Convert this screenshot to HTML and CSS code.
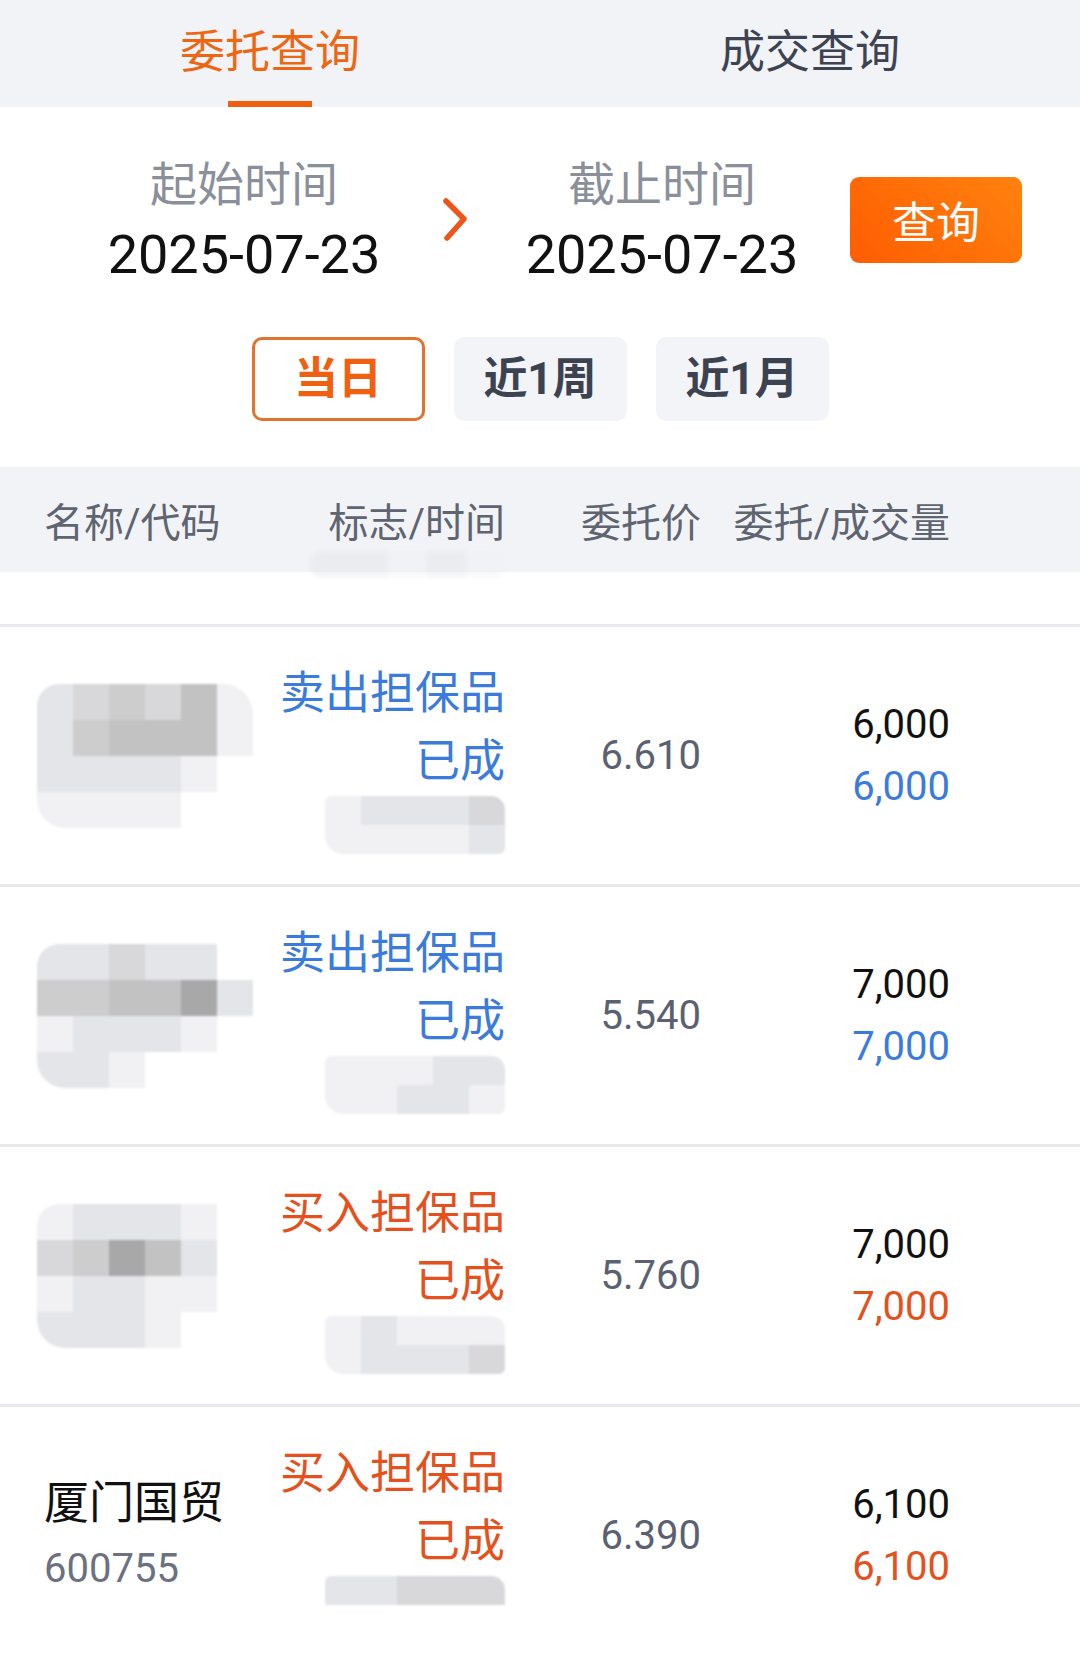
FILE: index.html
```html
<!DOCTYPE html>
<html lang="zh-CN">

<head>
  <meta charset="UTF-8" />
  <title>委托查询</title>
  <link rel="stylesheet" href="styles.css">
</head>

<body>
  <div class="tabs">
    <div class="tab active">委托查询</div>
    <div class="tab">成交查询</div>
  </div>

  <div class="range">
    <div class="date-row">
      <div class="date start">
        <div class="date-label">起始时间</div>
        <div class="date-value">2025-07-23</div>
      </div>
      <div class="arrow">
        <svg width="30" height="48" viewBox="0 0 30 48">
          <path d="M6 5 L24 23 L7 42" fill="none" stroke="#ee5518" stroke-width="5.5" stroke-linecap="round" stroke-linejoin="round" />
        </svg>
      </div>
      <div class="date end">
        <div class="date-label">截止时间</div>
        <div class="date-value">2025-07-23</div>
      </div>
      <button class="query">查询</button>
    </div>
    <div class="periods">
      <span class="period current">当日</span>
      <span class="period">近1周</span>
      <span class="period">近1月</span>
    </div>
  </div>

  <div class="thead">
    <span class="h-name">名称/代码</span>
    <span class="h-flag">标志/时间</span>
    <span class="h-price">委托价</span>
    <span class="h-qty">委托/成交量</span>
    <div class="ghost">
      <i class="c2"></i><i class="c2"></i><i class="c1"></i><i class="c2"></i><i class="c1"></i>
    </div>
  </div>

  <div class="partial"></div>

  <ul class="list">
    <li class="row">
      <div class="col-name">
        <div class="mosaic name-mask">
          <i class="c2"></i><i class="c3"></i><i class="c4"></i><i class="c3"></i><i class="c5"></i><i class="c1"></i>
          <i class="c2"></i><i class="c4"></i><i class="c5"></i><i class="c5"></i><i class="c5"></i><i class="c1"></i>
          <i class="c2"></i><i class="c2"></i><i class="c2"></i><i class="c2"></i><i class="c1"></i><i></i>
          <i class="c1"></i><i class="c1"></i><i class="c1"></i><i class="c1"></i><i></i><i></i>
        </div>
      </div>
      <div class="col-flag sell">
        <div>卖出担保品</div>
        <div>已成</div>
        <div class="mosaic time-mask">
          <i class="c1"></i><i class="c2"></i><i class="c2"></i><i class="c2"></i><i class="c3"></i>
          <i class="c1"></i><i class="c1"></i><i class="c1"></i><i class="c1"></i><i class="c2"></i>
        </div>
      </div>
      <div class="col-price">6.610</div>
      <div class="col-qty sell">
        <div class="total">6,000</div>
        <div>6,000</div>
      </div>
    </li>

    <li class="row">
      <div class="col-name">
        <div class="mosaic name-mask">
          <i class="c2"></i><i class="c2"></i><i class="c3"></i><i class="c2"></i><i class="c2"></i><i></i>
          <i class="c4"></i><i class="c4"></i><i class="c5"></i><i class="c5"></i><i class="c6"></i><i class="c2"></i>
          <i class="c1"></i><i class="c2"></i><i class="c2"></i><i class="c2"></i><i class="c1"></i><i></i>
          <i class="c2"></i><i class="c2"></i><i class="c1"></i><i></i><i></i><i></i>
        </div>
      </div>
      <div class="col-flag sell">
        <div>卖出担保品</div>
        <div>已成</div>
        <div class="mosaic time-mask">
          <i class="c1"></i><i class="c1"></i><i class="c1"></i><i class="c2"></i><i class="c2"></i>
          <i class="c1"></i><i class="c1"></i><i class="c2"></i><i class="c2"></i><i class="c1"></i>
        </div>
      </div>
      <div class="col-price">5.540</div>
      <div class="col-qty sell">
        <div class="total">7,000</div>
        <div>7,000</div>
      </div>
    </li>

    <li class="row">
      <div class="col-name">
        <div class="mosaic name-mask">
          <i class="c1"></i><i class="c2"></i><i class="c2"></i><i class="c2"></i><i class="c1"></i><i></i>
          <i class="c3"></i><i class="c4"></i><i class="c6"></i><i class="c5"></i><i class="c2"></i><i></i>
          <i class="c1"></i><i class="c2"></i><i class="c2"></i><i class="c1"></i><i class="c1"></i><i></i>
          <i class="c2"></i><i class="c2"></i><i class="c2"></i><i class="c1"></i><i></i><i></i>
        </div>
      </div>
      <div class="col-flag buy">
        <div>买入担保品</div>
        <div>已成</div>
        <div class="mosaic time-mask">
          <i class="c1"></i><i class="c2"></i><i class="c1"></i><i class="c1"></i><i class="c1"></i>
          <i class="c1"></i><i class="c2"></i><i class="c2"></i><i class="c2"></i><i class="c3"></i>
        </div>
      </div>
      <div class="col-price">5.760</div>
      <div class="col-qty buy">
        <div class="total">7,000</div>
        <div>7,000</div>
      </div>
    </li>

    <li class="row">
      <div class="col-name">
        <div class="stock">厦门国贸</div>
        <div class="code">600755</div>
      </div>
      <div class="col-flag buy">
        <div>买入担保品</div>
        <div>已成</div>
        <div class="mosaic time-mask">
          <i class="c2"></i><i class="c2"></i><i class="c3"></i><i class="c3"></i><i class="c3"></i>
          <i></i><i></i><i></i><i></i><i></i>
        </div>
      </div>
      <div class="col-price">6.390</div>
      <div class="col-qty buy">
        <div class="total">6,100</div>
        <div>6,100</div>
      </div>
    </li>
  </ul>
</body>

</html>
```

FILE: styles.css
```css
* {
  padding: 0;
  margin: 0;
  list-style: none;
  border: 0;
  box-sizing: border-box;
}

body {
  width: 1080px;
  background: #fff;
  font-family: Roboto, "Noto Sans CJK SC", sans-serif;
  color: #111;
}

/* 顶部标签 */
.tabs {
  display: flex;
  height: 107px;
  background: #f2f3f7;
}

.tab {
  flex: 1;
  position: relative;
  text-align: center;
  font-size: 45px;
  line-height: 106px;
  color: #3d4350;
}

.tab.active {
  color: #ef6612;
}

.tab.active::after {
  content: '';
  position: absolute;
  left: 228px;
  bottom: 0;
  width: 84px;
  height: 6px;
  background: #ef600f;
}

/* 时间区间 */
.range {
  padding-top: 46px;
  padding-bottom: 46px;
}

.date-row {
  display: flex;
  align-items: center;
}

.date {
  text-align: center;
}

.date.start {
  width: 340px;
  margin-left: 74px;
}

.date.end {
  width: 332px;
}

.date-label {
  font-size: 47px;
  line-height: 64px;
  color: #8a8f9a;
}

.date-value {
  font-size: 54px;
  line-height: 76px;
  color: #111;
}

.arrow {
  width: 82px;
  display: flex;
  justify-content: center;
  margin-top: -6px;
}

.query {
  margin-left: 22px;
  width: 172px;
  height: 86px;
  border-radius: 9px;
  background: linear-gradient(45deg, #ff5c00, #ff820f);
  color: #fff;
  font-family: "Noto Sans CJK SC", sans-serif;
  font-size: 44px;
  margin-top: -6px;
}

.periods {
  display: flex;
  justify-content: center;
  gap: 29px;
  margin-top: 44px;
}

.period {
  width: 173px;
  height: 84px;
  border-radius: 10px;
  background: #f3f4f8;
  color: #3c4250;
  font-size: 44px;
  font-weight: bold;
  line-height: 84px;
  text-align: center;
}

.period.current {
  background: #fff;
  border: 3px solid #e0742f;
  color: #f06010;
  line-height: 78px;
}

/* 表头 */
.thead {
  position: relative;
  display: grid;
  grid-template-columns: 236px 225px 196px 249px;
  align-items: center;
  height: 105px;
  padding-left: 44px;
  background: #f2f3f7;
  font-size: 40px;
  color: #5e6470;
}

.h-flag,
.h-price,
.h-qty {
  text-align: right;
}

.ghost {
  position: absolute;
  left: 310px;
  top: 84px;
  display: grid;
  grid-template-columns: repeat(5, 39px);
  height: 26px;
  border-radius: 10px;
  overflow: hidden;
  opacity: 0.45;
  filter: blur(2px);
}

.partial {
  height: 52px;
}

/* 列表 */
.row {
  display: grid;
  grid-template-columns: 236px 225px 196px 249px;
  align-items: center;
  height: 260px;
  padding-left: 44px;
  border-top: 3px solid #e7e9ec;
}

.col-name .stock {
  font-size: 45px;
  line-height: 65px;
  color: #111;
}

.col-name .code {
  font-size: 40px;
  line-height: 65px;
  color: #6b7180;
}

.col-flag {
  text-align: right;
  font-size: 45px;
  line-height: 68px;
  padding-top: 2px;
}

.col-price {
  text-align: right;
  font-size: 40px;
  color: #5b6170;
}

.col-qty {
  text-align: right;
  font-size: 40px;
  line-height: 62px;
}

.sell {
  color: #3a7bdc;
}

.buy {
  color: #e5501c;
}

.col-qty .total {
  color: #111;
}

/* 打码块 */
.mosaic {
  display: grid;
  filter: blur(0.8px);
  overflow: hidden;
}

.name-mask {
  margin-left: -7px;
  grid-template-columns: repeat(6, 36px);
  grid-auto-rows: 36px;
  width: 216px;
  border-radius: 22px 30px 16px 28px;
}

.time-mask {
  margin: 0 0 0 auto;
  grid-template-columns: repeat(5, 36px);
  grid-auto-rows: 29px;
  width: 180px;
  height: 58px;
  border-radius: 6px 14px 6px 18px;
}

.c1 { background: #f1f1f3; }
.c2 { background: #e4e5e8; }
.c3 { background: #d8d8da; }
.c4 { background: #cdcdcd; }
.c5 { background: #c2c2c2; }
.c6 { background: #a8a8a8; }
```
